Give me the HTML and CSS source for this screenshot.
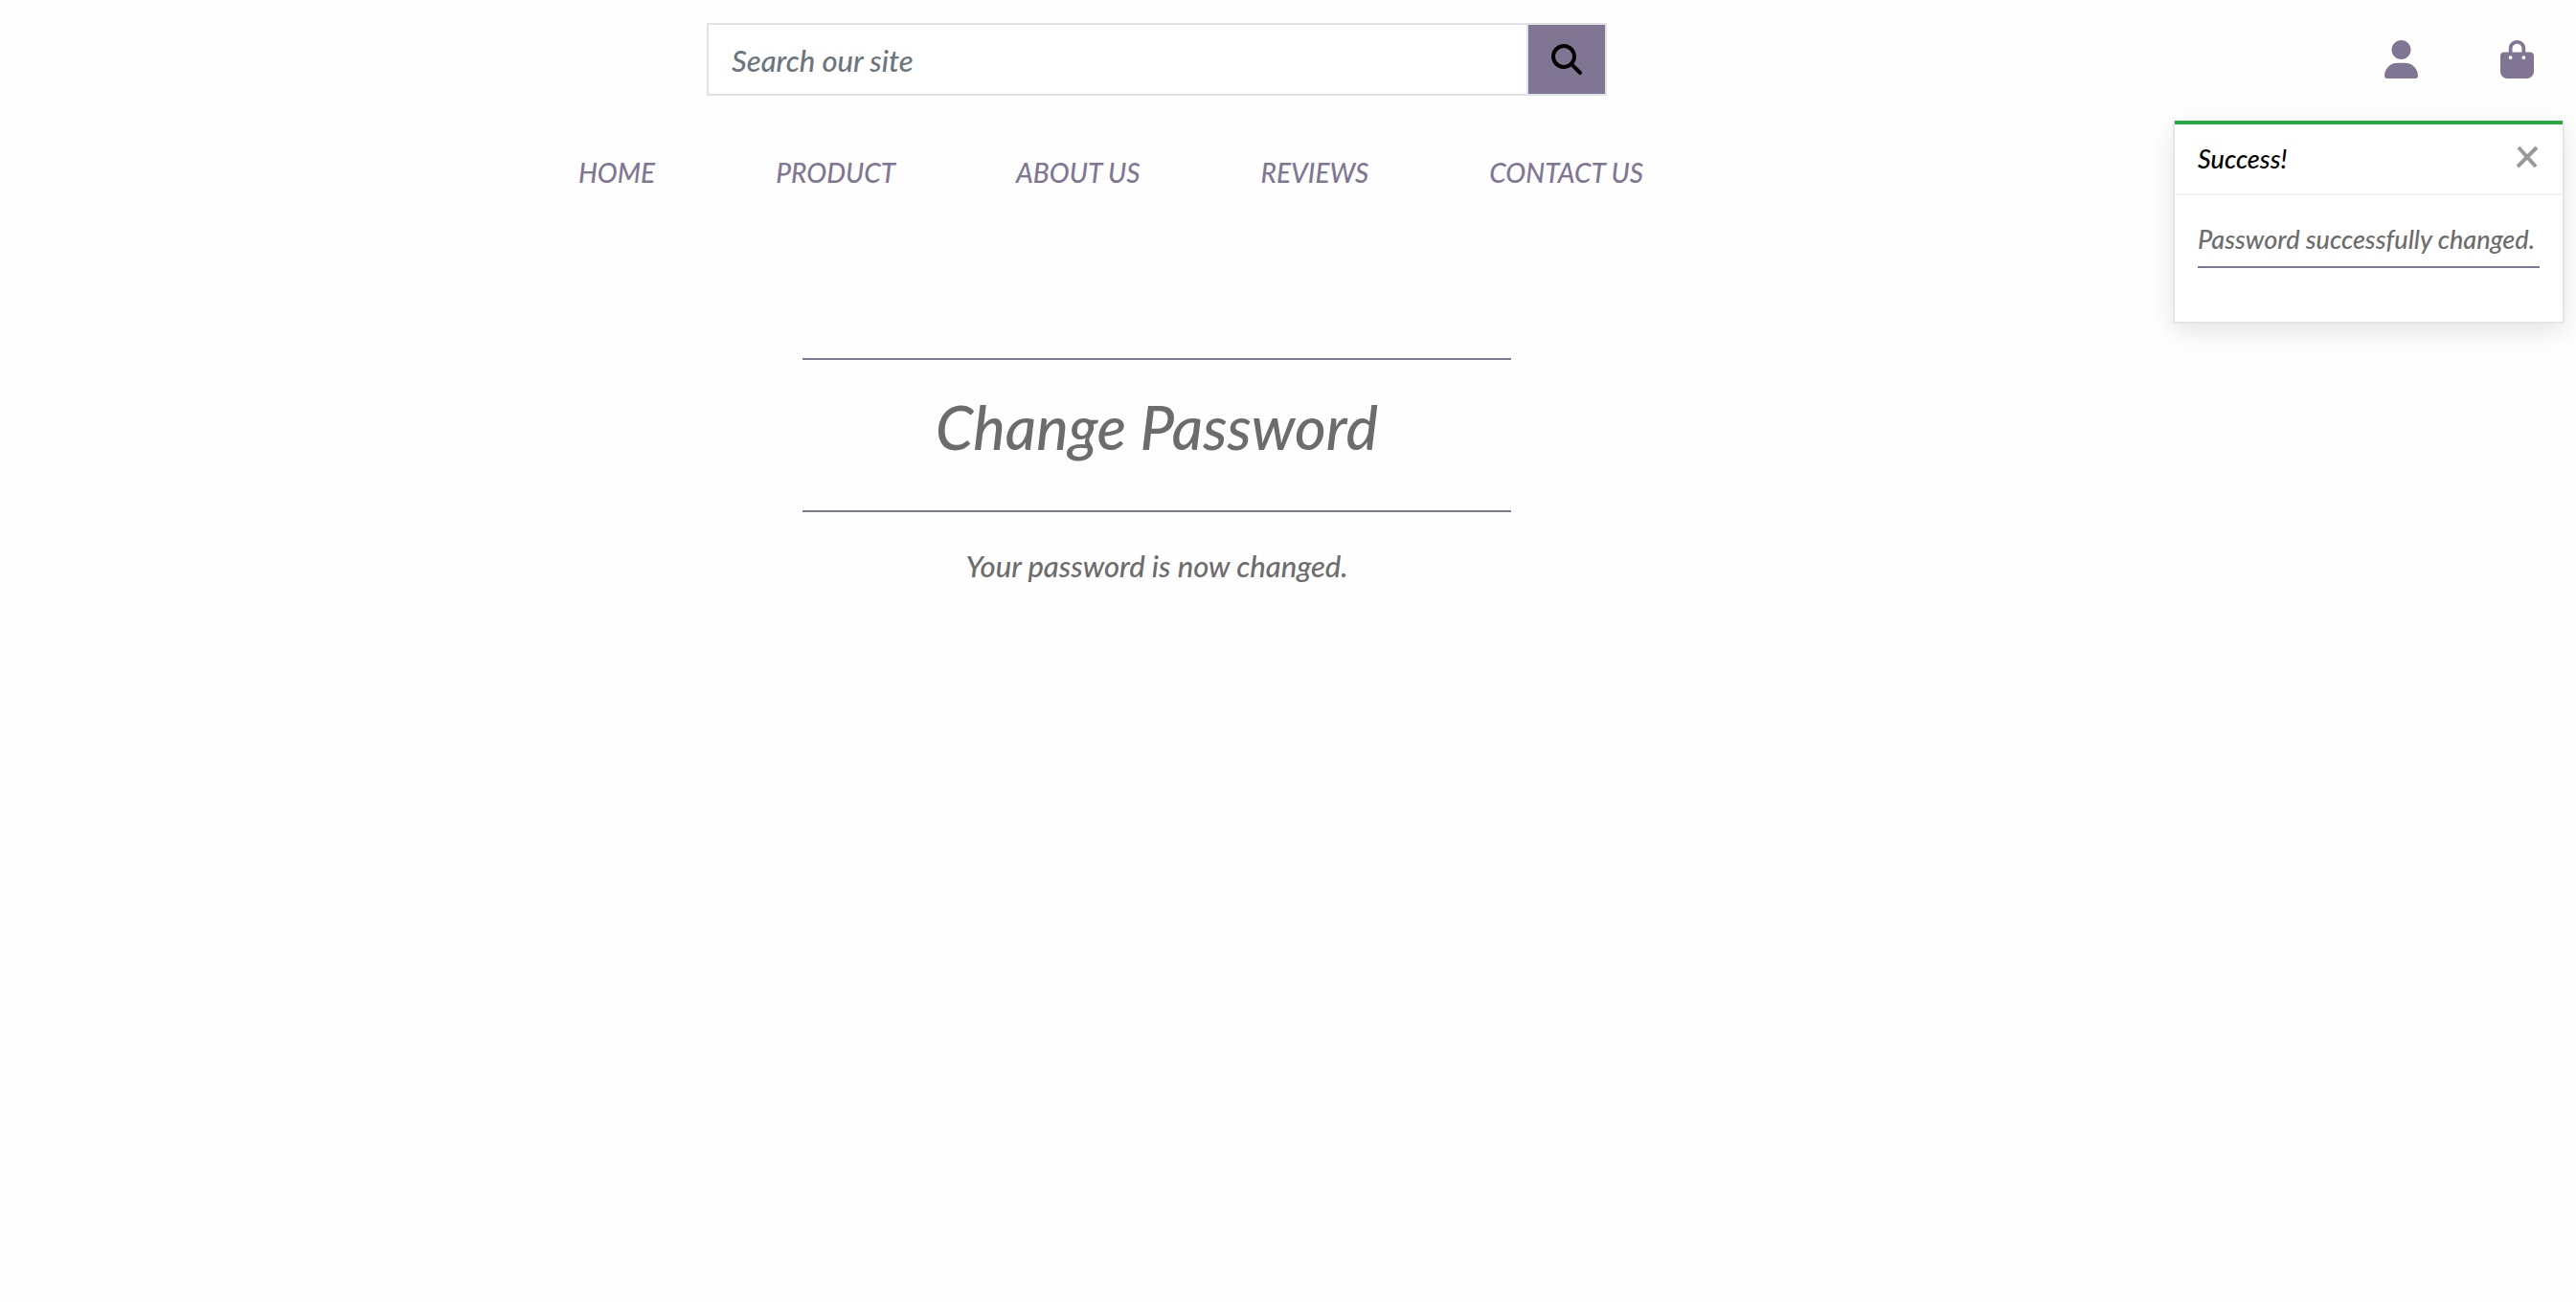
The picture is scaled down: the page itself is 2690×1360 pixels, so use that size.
FILE: index.html
```html
<!DOCTYPE html>
<html lang="en">
<head>
<meta charset="utf-8">
<meta name="viewport" content="width=device-width, initial-scale=1">
<title>Change Password</title>
<link rel="stylesheet" href="styles.css">
</head>
<body>
<header class="site-header">
  <div class="header-main">
    <form class="search" role="search">
      <input class="search-input" type="search" name="q" placeholder="Search our site" aria-label="Search our site">
      <button class="search-button" type="submit" aria-label="Search">
        <svg class="search-icon" viewBox="0 0 512 512" aria-hidden="true"><path d="M416 208c0 45.9-14.9 88.3-40 122.7L502.6 457.4c12.5 12.5 12.5 32.8 0 45.3s-32.8 12.5-45.3 0L330.7 376c-34.4 25.2-76.8 40-122.7 40C93.1 416 0 322.9 0 208S93.1 0 208 0S416 93.1 416 208zM208 352a144 144 0 1 0 0-288 144 144 0 1 0 0 288z"/></svg>
      </button>
    </form>
    <nav class="main-nav" aria-label="Main">
      <a class="nav-link" href="#">HOME</a>
      <a class="nav-link" href="#">PRODUCT</a>
      <a class="nav-link" href="#">ABOUT US</a>
      <a class="nav-link" href="#">REVIEWS</a>
      <a class="nav-link" href="#">CONTACT US</a>
    </nav>
  </div>
  <div class="account">
    <a class="account-link" href="#" aria-label="My account">
      <svg class="account-icon" viewBox="0 0 448 512" aria-hidden="true"><path d="M224 256c70.7 0 128-57.31 128-128s-57.3-128-128-128C153.3 0 96 57.31 96 128S153.3 256 224 256zM274.7 304H173.3C77.61 304 0 381.6 0 477.3c0 19.14 15.52 34.67 34.66 34.67h378.7C432.5 512 448 496.5 448 477.3C448 381.6 370.4 304 274.7 304z"/></svg>
    </a>
    <a class="account-link" href="#" aria-label="Shopping bag">
      <svg class="account-icon" viewBox="0 0 448 512" aria-hidden="true"><path d="M112 112C112 50.14 162.1 0 224 0C285.9 0 336 50.14 336 112V160H400C426.5 160 448 181.5 448 208V416C448 469 405 512 352 512H96C42.98 512 0 469 0 416V208C0 181.5 21.49 160 48 160H112V112zM160 160H288V112C288 76.65 259.3 48 224 48C188.7 48 160 76.65 160 112V160zM136 256C149.3 256 160 245.3 160 232C160 218.7 149.3 208 136 208C122.7 208 112 218.7 112 232C112 245.3 122.7 256 136 256zM312 208C298.7 208 288 218.7 288 232C288 245.3 298.7 256 312 256C325.3 256 336 245.3 336 232C336 218.7 325.3 208 312 208z"/></svg>
    </a>
  </div>
</header>

<section class="toast" role="status">
  <div class="toast-header">
    <strong class="toast-title">Success!</strong>
    <button class="toast-close" type="button" aria-label="Close">
      <svg class="close-icon" viewBox="0 0 24 24" aria-hidden="true"><path d="M3 2L21 22M22 2L2 22"/></svg>
    </button>
  </div>
  <div class="toast-body">
    <p class="toast-message">Password successfully changed.</p>
  </div>
</section>

<main class="content">
  <div class="panel">
    <h1 class="panel-title">Change Password</h1>
    <p class="panel-text">Your password is now changed.</p>
  </div>
</main>
</body>
</html>
```
FILE: styles.css
```css
:root {
  --accent: #807694;
  --text: #6c6c6c;
  --side: 274px;
}

* {
  box-sizing: border-box;
}

body {
  margin: 0;
  background: #fefefe;
  color: var(--text);
  font: italic 500 31px/48px Lato, "Liberation Sans", sans-serif;
}

.site-header {
  display: grid;
  grid-template-columns: 1fr var(--side);
  padding-top: 24px;
}

.search {
  display: flex;
  width: 100%;
  max-width: 940px;
  height: 76px;
  margin: 0 auto;
}

.search-input {
  flex: 1;
  min-width: 0;
  padding: 2px 24px 0;
  border: 2px solid #dee2e6;
  border-right: 0;
  border-radius: 0;
  background: #fff;
  font: inherit;
  color: inherit;
  appearance: none;
}

.search-input::placeholder {
  color: #6c757d;
  opacity: 1;
}

.search-button {
  display: grid;
  place-items: center;
  width: 84px;
  padding: 0;
  border: 2px solid #dee2e6;
  background: var(--accent);
}

.search-icon {
  width: 32px;
  height: 32px;
}

.main-nav {
  display: flex;
  justify-content: center;
  gap: 126px;
  margin-top: 56px;
  padding-right: 96px;
  font-size: 28px;
}

.nav-link {
  color: var(--accent);
  text-decoration: none;
}

.account {
  display: flex;
  align-items: flex-start;
  justify-content: flex-end;
  gap: 86px;
  padding: 18px 44px 0 0;
}

.account-link {
  display: block;
}

.account-icon {
  display: block;
  width: 35px;
  height: 40px;
  fill: var(--accent);
}

.toast {
  position: absolute;
  top: 126px;
  right: 12px;
  min-width: 409px;
  border: 2px solid #e5e5e5;
  border-top: 0;
  background: #fff;
  box-shadow: 0 8px 24px rgba(0, 0, 0, 0.1);
  font-size: 27px;
}

.toast-header {
  display: flex;
  align-items: center;
  justify-content: space-between;
  padding: 12px 24px;
  border-top: 4px solid #28a745;
  border-bottom: 2px solid #f2f2f2;
}

.toast-title {
  color: #000;
  font-weight: 500;
}

.toast-close {
  padding: 0 0 4px;
  border: 0;
  background: none;
}

.close-icon {
  display: block;
  width: 26px;
  height: 24px;
  fill: none;
  stroke: #97999b;
  stroke-width: 4;
}

.toast-body {
  padding: 22px 24px 56px;
}

.toast-message {
  margin: 0;
  padding-bottom: 4px;
  border-bottom: 2px solid var(--accent);
}

.content {
  padding: 170px var(--side) 0 0;
}

.panel {
  max-width: 740px;
  margin: 0 auto;
  text-align: center;
}

.panel-title {
  margin: 0 0 32px;
  padding: 30px 0 47px;
  border: solid var(--accent);
  border-width: 2px 0;
  font-size: 63px;
  font-weight: 500;
  line-height: 80px;
}

.panel-text {
  margin: 0;
}
```
